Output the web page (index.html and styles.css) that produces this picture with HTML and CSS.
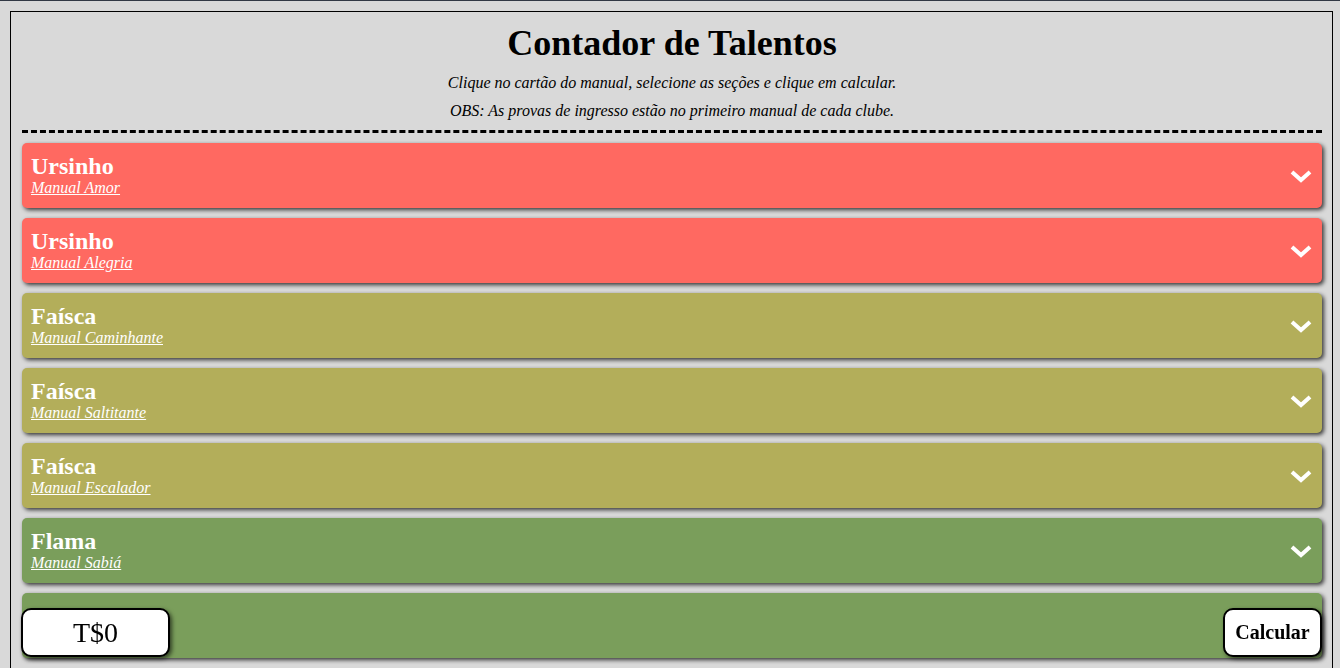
FILE: index.html
```html
<!DOCTYPE html>
<html>
	<head>
		<meta charset="UTF-8">
		<title>Contador de Talentos</title>
		<link rel="stylesheet" href="styles.css">
	</head>
	<body>
		<div id="box">
			<div class="topo">
				<h1>Contador de Talentos</h1>
				<p>Clique no cartão do manual, selecione as seções e clique em calcular.</p>
				<p>OBS: As provas de ingresso estão no primeiro manual de cada clube.</p>
			</div>
			<div class="lista">
				<div class="cartao ursinho">
					<div class="info">
						<h2>Ursinho</h2>
						<a href="#">Manual Amor</a>
					</div>
					<svg class="seta" width="22" height="14" viewBox="0 0 22 14"><polyline points="2,3 11,11 20,3" fill="none" stroke="#fff" stroke-width="4"/></svg>
				</div>
				<div class="cartao ursinho">
					<div class="info">
						<h2>Ursinho</h2>
						<a href="#">Manual Alegria</a>
					</div>
					<svg class="seta" width="22" height="14" viewBox="0 0 22 14"><polyline points="2,3 11,11 20,3" fill="none" stroke="#fff" stroke-width="4"/></svg>
				</div>
				<div class="cartao faisca">
					<div class="info">
						<h2>Faísca</h2>
						<a href="#">Manual Caminhante</a>
					</div>
					<svg class="seta" width="22" height="14" viewBox="0 0 22 14"><polyline points="2,3 11,11 20,3" fill="none" stroke="#fff" stroke-width="4"/></svg>
				</div>
				<div class="cartao faisca">
					<div class="info">
						<h2>Faísca</h2>
						<a href="#">Manual Saltitante</a>
					</div>
					<svg class="seta" width="22" height="14" viewBox="0 0 22 14"><polyline points="2,3 11,11 20,3" fill="none" stroke="#fff" stroke-width="4"/></svg>
				</div>
				<div class="cartao faisca">
					<div class="info">
						<h2>Faísca</h2>
						<a href="#">Manual Escalador</a>
					</div>
					<svg class="seta" width="22" height="14" viewBox="0 0 22 14"><polyline points="2,3 11,11 20,3" fill="none" stroke="#fff" stroke-width="4"/></svg>
				</div>
				<div class="cartao flama">
					<div class="info">
						<h2>Flama</h2>
						<a href="#">Manual Sabiá</a>
					</div>
					<svg class="seta" width="22" height="14" viewBox="0 0 22 14"><polyline points="2,3 11,11 20,3" fill="none" stroke="#fff" stroke-width="4"/></svg>
				</div>
				<!-- cartão coberto pelo rodapé -->
				<div class="cartao flama"></div>
			</div>
		</div>
		<div id="rodape">
			<div class="total">T$0</div>
			<button class="calcular">Calcular</button>
		</div>
	</body>
</html>
```

FILE: styles.css
```css
html{
	border-top: 1px solid #323844;
	background: #d9d9d9;
}
body{
	margin: 10px 7px 0 10px;
	font-family: "Liberation Serif", "Times New Roman", serif;
	background: #d9d9d9;
}
#box{
	border: 1px solid #000;
	padding: 0 10px 20px 11px;
}
.topo{
	text-align: center;
	border-bottom: 3px dashed #000;
	padding-bottom: 10px;
}
.topo h1{
	margin: 0;
	padding-top: 11px;
	font-size: 36px;
	line-height: 41px;
}
.topo p{
	margin: 10px 0 0;
	font-size: 16px;
	font-style: italic;
	line-height: 18px;
}
.lista{
	display: flex;
	flex-direction: column;
	gap: 10px;
	padding-top: 10px;
}
.cartao{
	height: 65px;
	box-sizing: border-box;
	display: flex;
	align-items: center;
	justify-content: space-between;
	padding: 0 10px 0 9px;
	border-radius: 5px;
	box-shadow: 2px 2px 4px rgba(0,0,0,.75);
	color: #fff;
}
.ursinho{
	background: #ff6961;
}
.faisca{
	background: #b3ae5a;
}
.flama{
	background: #7a9e5b;
}
.info h2{
	margin: 0;
	font-size: 24px;
	line-height: 25px;
}
.info a{
	display: block;
	color: #fff;
	font-size: 16px;
	font-style: italic;
	line-height: 18px;
}
.seta{
	display: block;
}
#rodape{
	position: fixed;
	left: 21px;
	right: 18px;
	bottom: 11px;
	display: flex;
	justify-content: space-between;
}
.total, .calcular{
	height: 49px;
	box-sizing: border-box;
	background: #fff;
	border: 2px solid #000;
	border-radius: 10px;
	box-shadow: 2px 2px 4px rgba(0,0,0,.6);
	font-family: "Liberation Serif", "Times New Roman", serif;
	display: flex;
	align-items: center;
	justify-content: center;
}
.total{
	width: 149px;
	font-size: 28px;
}
.calcular{
	width: 99px;
	padding: 0;
	font-size: 20px;
	font-weight: bold;
	color: #000;
}
```
